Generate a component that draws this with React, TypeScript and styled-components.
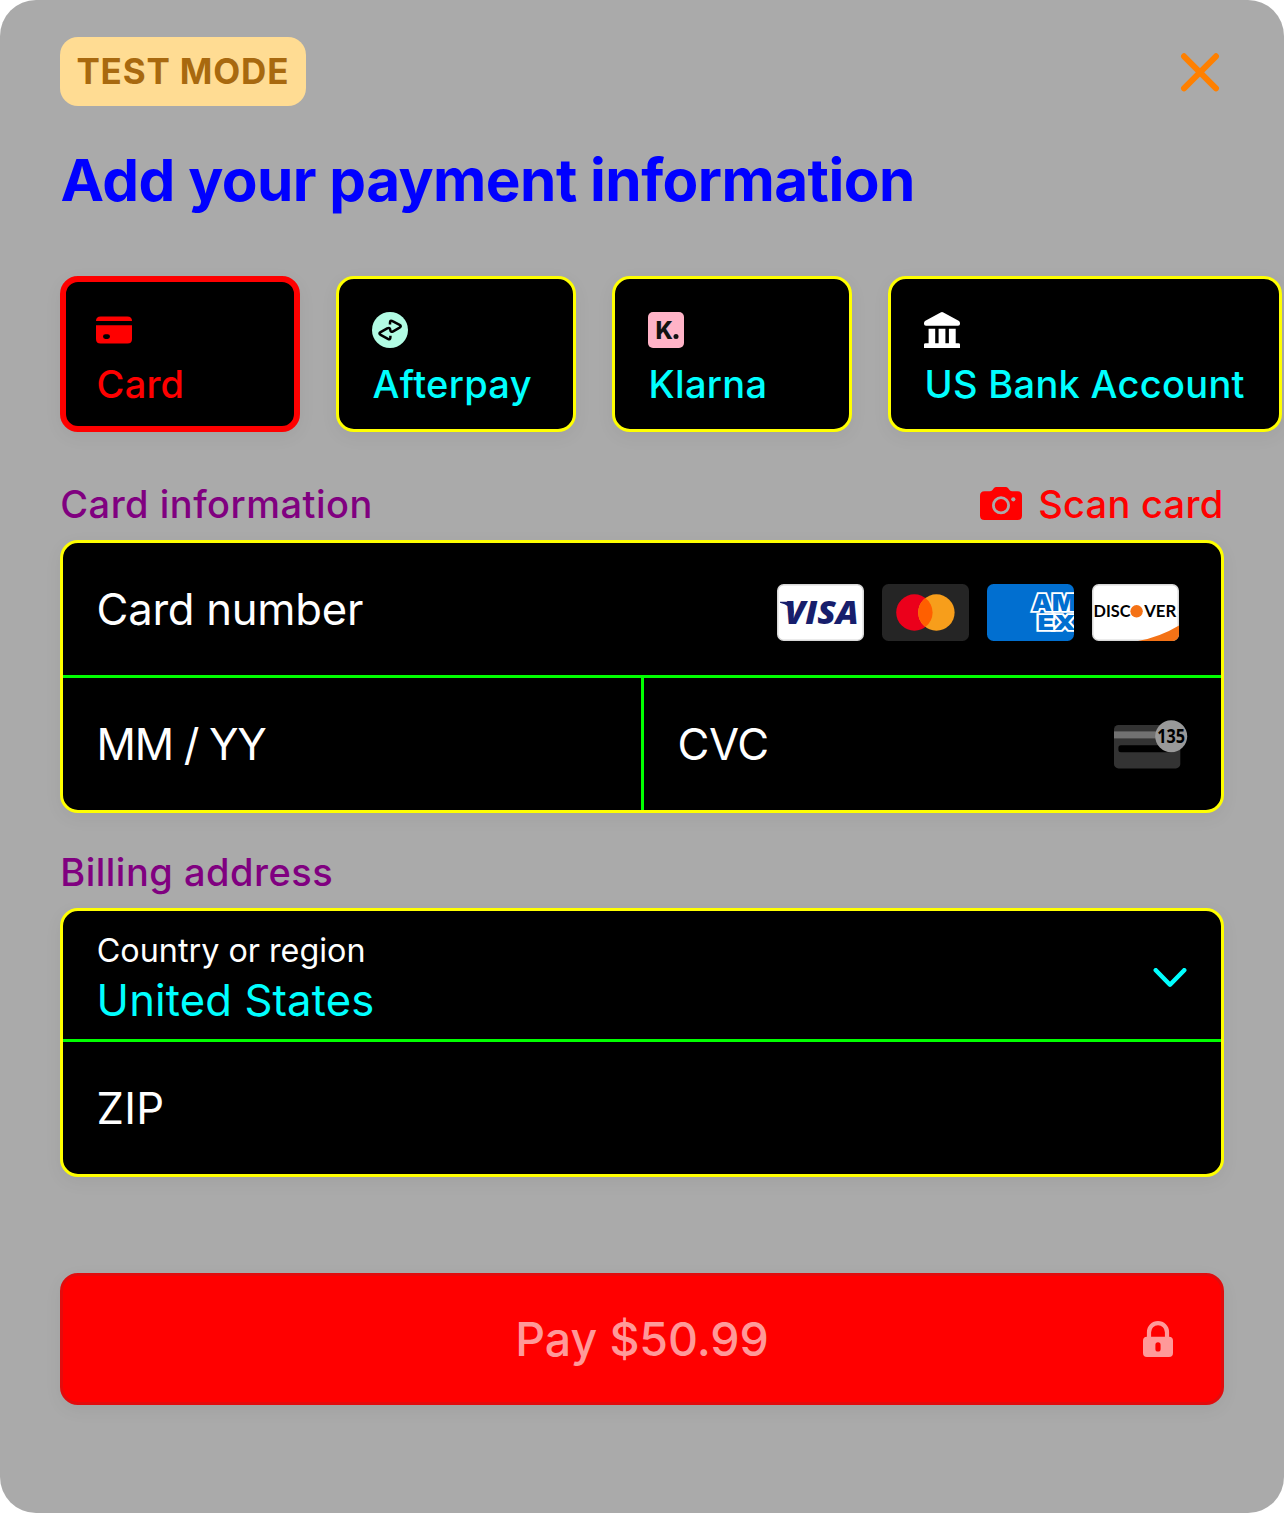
import React from "react";
import styled, { createGlobalStyle } from "styled-components";

const GlobalStyle = createGlobalStyle`
  *, *::before, *::after { box-sizing: border-box; }
  body { margin: 0; background: #fff; }
  button { font: inherit; color: inherit; appearance: none; cursor: pointer; }
`;

const Sheet = styled.main`
  display: flex;
  flex-direction: column;
  width: 1284px;
  height: 1513px;
  padding: 37px 60px 0;
  overflow: hidden;
  border-radius: 36px;
  background: #aaaaaa;
  font-family: Inter, "Liberation Sans", sans-serif;
  svg { display: block; flex: none; }
`;

const Header = styled.header`
  display: flex;
  align-items: center;
  justify-content: space-between;
  height: 69px;
`;

const Badge = styled.span`
  width: 246px;
  height: 69px;
  padding-left: 16.4px;
  border-radius: 18px;
  background: #ffdc93;
  color: #a8690f;
  font-size: 35px;
  font-weight: 700;
  line-height: 68.5px;
  letter-spacing: 0.85px;
  white-space: nowrap;
`;

const CloseButton = styled.button`
  padding: 0;
  margin-right: 4px;
  border: 0;
  background: none;
`;

const Title = styled.h1`
  margin: 38px 0 0 0.6px;
  color: #0000ff;
  font-size: 58.4px;
  font-weight: 700;
  line-height: 71px;
  letter-spacing: -0.54px;
  white-space: nowrap;
`;

const Tabs = styled.div`
  display: flex;
  gap: 36px;
  margin-top: 61px;
  margin-right: -60px;
`;

const Tab = styled.button<{ $selected?: boolean; $wide?: boolean }>`
  display: flex;
  flex: none;
  flex-direction: column;
  align-items: flex-start;
  width: ${(p) => (p.$wide ? 394 : 240)}px;
  height: 156px;
  padding: ${(p) => (p.$selected ? 30 : 33)}px;
  border: ${(p) => (p.$selected ? "6px solid #ff0000" : "3px solid #ffff00")};
  border-radius: 18px;
  background: #000;
  color: ${(p) => (p.$selected ? "#ff0000" : "#00ffff")};
  box-shadow: 0 5px 18px rgba(0, 0, 0, 0.055);
`;

const TabLabel = styled.span<{ $tracking: number }>`
  margin: 12px 0 0 0.6px;
  font-size: 38px;
  font-weight: 500;
  line-height: 48px;
  letter-spacing: ${(p) => p.$tracking}px;
  white-space: nowrap;
`;

const SectionRow = styled.div<{ $top: number }>`
  display: flex;
  align-items: center;
  justify-content: space-between;
  height: 48px;
  margin-top: ${(p) => p.$top}px;
  font-size: 38px;
  font-weight: 500;
  line-height: 48px;
  white-space: nowrap;
`;

const SectionLabel = styled.h2`
  margin: 0 0 0 0.2px;
  color: #800080;
  font-size: inherit;
  font-weight: inherit;
  letter-spacing: 0.5px;
`;

const ScanButton = styled.button`
  display: flex;
  align-items: center;
  gap: 16px;
  padding: 0 0.6px 0 0;
  border: 0;
  background: none;
  color: #ff0000;
  letter-spacing: 0.27px;
`;

const FieldGroup = styled.div`
  margin-top: 12px;
  overflow: hidden;
  border: 3px solid #ffff00;
  border-radius: 18px;
  background: #000;
  box-shadow: 0 5px 18px rgba(0, 0, 0, 0.055);
`;

const FieldRow = styled.div<{ $divided?: boolean }>`
  display: flex;
  ${(p) => p.$divided && "border-top: 3px solid #00ff00;"}
`;

const Field = styled.div<{ $height?: number; $ruled?: boolean; $end?: number; $drop?: number }>`
  display: flex;
  flex: ${(p) => (p.$ruled ? "0 0 581px" : "1")};
  align-items: center;
  justify-content: space-between;
  height: ${(p) => p.$height ?? 132}px;
  padding: ${(p) => p.$drop ?? 2}px ${(p) => p.$end ?? 34}px 0 33.6px;
  ${(p) => p.$ruled && "border-right: 3px solid #00ff00;"}
`;

const FieldText = styled.span<{ $tracking?: number; $value?: boolean }>`
  color: ${(p) => (p.$value ? "#00ffff" : "#ffffff")};
  font-size: 43.6px;
  line-height: 54px;
  letter-spacing: ${(p) => p.$tracking ?? 0}px;
  white-space: nowrap;
`;

const FieldStack = styled.div`
  display: flex;
  flex-direction: column;
`;

const FloatingLabel = styled.span`
  margin: 0 0 3px 0.2px;
  color: #ffffff;
  font-size: 32.3px;
  line-height: 40px;
  white-space: nowrap;
`;

const Brands = styled.div`
  display: flex;
  gap: 18px;
  margin-top: 5px;
`;

const PayButton = styled.button`
  display: grid;
  grid-template-columns: 1fr auto 1fr;
  align-items: center;
  height: 132px;
  margin-top: 96px;
  padding: 0 48px;
  border: 3px solid #e30b0c;
  border-radius: 18px;
  background: #ff0000;
  color: #ff9999;
  box-shadow: 0 5px 18px rgba(0, 0, 0, 0.055);
  svg { grid-column: 3; justify-self: end; }
`;

const PayLabel = styled.span`
  grid-column: 2;
  font-size: 46.5px;
  font-weight: 500;
  line-height: 58px;
  letter-spacing: -0.08px;
  white-space: nowrap;
`;

const CloseIcon = () => (
  <svg width="40" height="40" viewBox="0 0 40 40" fill="none" stroke="#ff8000" strokeWidth="6" strokeLinecap="round">
    <path d="M4 4.3 36 36.3M36 4.3 4 36.3" />
  </svg>
);

const CardIcon = () => (
  <svg width="36" height="36" viewBox="0 0 36 36" fill="#ff0000">
    <path d="M0 9Q0 4.4 4.6 4.4H31.4Q36 4.4 36 9Z" />
    <path fillRule="evenodd" d="M0 13.2H36V26.9Q36 31.4 31.5 31.4H4.5Q0 31.4 0 26.9ZM9.4 22.2A2.4 2.4 0 0 0 9.4 27H11.6A2.4 2.4 0 0 0 11.6 22.2Z" />
  </svg>
);

const AfterpayIcon = () => (
  <svg width="36" height="36" viewBox="0 0 36 36">
    <circle cx="18" cy="18" r="18" fill="#b2fce4" />
    <g fill="none" stroke="#000" strokeWidth="2.5" strokeLinejoin="round">
      <path d="M18 12.6V10.8Q18 7.8 20.5 9.2L27.6 12.9Q29.9 14.2 27.6 15.6L21.2 19.3Q18.5 20.8 18.3 18" />
      <path d="M18.4 23.8V25.2Q18.4 28.2 15.9 26.8L8.6 22.8Q6.3 21.5 8.6 20.2L15.2 16.4Q18 15 18.3 18" />
    </g>
  </svg>
);

const KlarnaIcon = () => (
  <svg width="36" height="36" viewBox="0 0 36 36">
    <rect width="36" height="36" rx="5" fill="#ffb3c7" />
    <text x="7.4" y="27" fontFamily="Inter, sans-serif" fontSize="24.8" fontWeight="800" textLength="17.4" lengthAdjust="spacingAndGlyphs" fill="#111">K</text>
    <circle cx="28" cy="24.6" r="2.5" fill="#111" />
  </svg>
);

const BankIcon = () => (
  <svg width="36" height="36" viewBox="0 0 36 36" fill="#fff">
    <path d="M16.6.4Q18-.4 19.4.4L34.6 8.7Q36 9.5 36 11V12Q36 13.7 34 13.7H2Q0 13.7 0 12V11Q0 9.5 1.4 8.7Z" />
    <path d="M4.6 16.8H11.2V31.2H14.6V16.8H21.4V31.2H24.9V16.8H31.7V31.2H34.5Q36 31.2 36 32.6V36H0V32.6Q0 31.2 1.5 31.2H4.6Z" />
  </svg>
);

const CameraIcon = () => (
  <svg width="42" height="36" viewBox="0 0 42 36">
    <path fill="#ff0000" d="M4.5 5.2H9.6Q11.4 5.2 12.5 3.9L13.8 2.3Q14.8 1 16.5 1H25.5Q27.2 1 28.2 2.3L29.5 3.9Q30.6 5.2 32.4 5.2H37.5Q42 5.2 42 9.7V29.5Q42 34 37.5 34H4.5Q0 34 0 29.5V9.7Q0 5.2 4.5 5.2Z" />
    <circle cx="21" cy="19.3" r="7.6" fill="none" stroke="#aaa" strokeWidth="2.8" />
    <circle cx="33.3" cy="13.3" r="2.1" fill="#aaa" />
  </svg>
);

const VisaLogo = () => (
  <svg width="87" height="57" viewBox="0 0 87 57">
    <rect x="0.75" y="0.75" width="85.5" height="55.5" rx="6" fill="#fff" stroke="#d8d8d8" strokeWidth="1.5" />
    <path d="M3 17.8H12.4Q15.2 17.9 15.8 20.4L17 30Q13 21 3 18.7Z" fill="#171e6c" />
    <text x="7.4" y="40.4" fontFamily="'Open Sans', sans-serif" fontStyle="italic" fontWeight="800" fontSize="31.8" textLength="74.4" lengthAdjust="spacingAndGlyphs" fill="#171e6c">VISA</text>
  </svg>
);

const MastercardLogo = () => (
  <svg width="87" height="57" viewBox="0 0 87 57">
    <rect width="87" height="57" rx="6.5" fill="#252525" />
    <circle cx="32.4" cy="28.5" r="18.2" fill="#eb001b" />
    <circle cx="54.4" cy="28.5" r="18.2" fill="#f79e1b" />
    <path d="M43.4 14A18.2 18.2 0 0 1 43.4 43A18.2 18.2 0 0 1 43.4 14Z" fill="#ff5f00" />
  </svg>
);

const AmexLogo = () => (
  <svg width="87" height="57" viewBox="0 0 87 57">
    <defs>
      <clipPath id="amex-card"><rect width="87" height="57" rx="6.5" /></clipPath>
    </defs>
    <g clipPath="url(#amex-card)">
      <rect width="87" height="57" fill="#016fd0" />
      <g fontFamily="Inter, sans-serif" fontWeight="900" fill="#016fd0" stroke="#fff" strokeWidth="3.6" paintOrder="stroke" strokeLinejoin="miter">
        <text x="50.6" y="46" fontSize="20.6" textLength="38" lengthAdjust="spacingAndGlyphs">EX</text>
        <text x="45" y="27.4" fontSize="22.8" textLength="44" lengthAdjust="spacingAndGlyphs">AM</text>
      </g>
    </g>
  </svg>
);

const DiscoverLogo = () => (
  <svg width="87" height="57" viewBox="0 0 87 57">
    <defs>
      <clipPath id="discover-card"><rect width="87" height="57" rx="6.5" /></clipPath>
    </defs>
    <rect x="0.75" y="0.75" width="85.5" height="55.5" rx="6" fill="#fff" stroke="#d8d8d8" strokeWidth="1.5" />
    <path clipPath="url(#discover-card)" d="M46 57Q68 53 87 41.5V57Z" fill="#f47216" />
    <g fontFamily="Lato, sans-serif" fontWeight="700" fontSize="17" fill="#000">
      <text x="1.6" y="33.2" textLength="37" lengthAdjust="spacingAndGlyphs">DISC</text>
      <text x="52.2" y="33.2" textLength="32" lengthAdjust="spacingAndGlyphs">VER</text>
    </g>
    <circle cx="44.6" cy="27.3" r="6.2" fill="#f47216" />
  </svg>
);

const CvcIcon = () => (
  <svg width="74" height="50" viewBox="0 0 74 50">
    <rect y="5" width="66.3" height="43.4" rx="4.5" fill="#333" />
    <rect y="11.4" width="66.3" height="7" fill="#717171" />
    <rect x="4.4" y="25.3" width="56" height="7" rx="2.5" fill="#000" />
    <circle cx="57.2" cy="16.3" r="16" fill="#999" />
    <text x="43.2" y="23.2" fontFamily="'Open Sans', sans-serif" fontSize="19.4" fontWeight="700" textLength="27.8" lengthAdjust="spacingAndGlyphs" fill="#000">135</text>
  </svg>
);

const ChevronIcon = () => (
  <svg width="34" height="22" viewBox="0 0 34 22" fill="none" stroke="#00ffff" strokeWidth="4.5" strokeLinecap="round" strokeLinejoin="round">
    <path d="M2.8 2.2 17 16.7 31.2 2.2" />
  </svg>
);

const LockIcon = () => (
  <svg width="30" height="36" viewBox="0 0 30 36">
    <path d="M6 17V11.2A9 9 0 0 1 24 11.2V17" fill="none" stroke="#ff9999" strokeWidth="4.2" />
    <path fill="#ff9999" fillRule="evenodd" d="M4 15.8H26Q30 15.8 30 19.8V32Q30 36 26 36H4Q0 36 0 32V19.8Q0 15.8 4 15.8ZM15 21.3A2.6 2.6 0 0 0 12.4 23.9V27.9A2.6 2.6 0 0 0 17.6 27.9V23.9A2.6 2.6 0 0 0 15 21.3Z" />
  </svg>
);

const methods = [
  { name: "Card", tracking: 0.2, icon: <CardIcon />, selected: true },
  { name: "Afterpay", tracking: 0.33, icon: <AfterpayIcon /> },
  { name: "Klarna", tracking: 0.3, icon: <KlarnaIcon /> },
  { name: "US Bank Account", tracking: 0.3, icon: <BankIcon />, wide: true },
];

export default function App() {
  return (
    <>
      <GlobalStyle />
      <Sheet>
        <Header>
          <Badge>TEST MODE</Badge>
          <CloseButton aria-label="Close">
            <CloseIcon />
          </CloseButton>
        </Header>
        <Title>Add your payment information</Title>
        <Tabs>
          {methods.map((m) => (
            <Tab key={m.name} $selected={m.selected} $wide={m.wide}>
              {m.icon}
              <TabLabel $tracking={m.tracking}>{m.name}</TabLabel>
            </Tab>
          ))}
        </Tabs>

        <SectionRow $top={48}>
          <SectionLabel>Card information</SectionLabel>
          <ScanButton>
            <CameraIcon />
            Scan card
          </ScanButton>
        </SectionRow>
        <FieldGroup>
          <FieldRow>
            <Field $end={42}>
              <FieldText $tracking={-0.25}>Card number</FieldText>
              <Brands>
                <VisaLogo />
                <MastercardLogo />
                <AmexLogo />
                <DiscoverLogo />
              </Brands>
            </Field>
          </FieldRow>
          <FieldRow $divided>
            <Field $ruled>
              <FieldText $tracking={-1.3}>MM / YY</FieldText>
            </Field>
            <Field $end={33}>
              <FieldText $tracking={-0.4}>CVC</FieldText>
              <CvcIcon />
            </Field>
          </FieldRow>
        </FieldGroup>

        <SectionRow $top={35}>
          <SectionLabel>Billing address</SectionLabel>
        </SectionRow>
        <FieldGroup>
          <FieldRow>
            <Field $height={128} $drop={8}>
              <FieldStack>
                <FloatingLabel>Country or region</FloatingLabel>
                <FieldText $value $tracking={0.12}>United States</FieldText>
              </FieldStack>
              <ChevronIcon />
            </Field>
          </FieldRow>
          <FieldRow $divided>
            <Field>
              <FieldText $tracking={0.3}>ZIP</FieldText>
            </Field>
          </FieldRow>
        </FieldGroup>

        <PayButton>
          <PayLabel>Pay $50.99</PayLabel>
          <LockIcon />
        </PayButton>
      </Sheet>
    </>
  );
}
